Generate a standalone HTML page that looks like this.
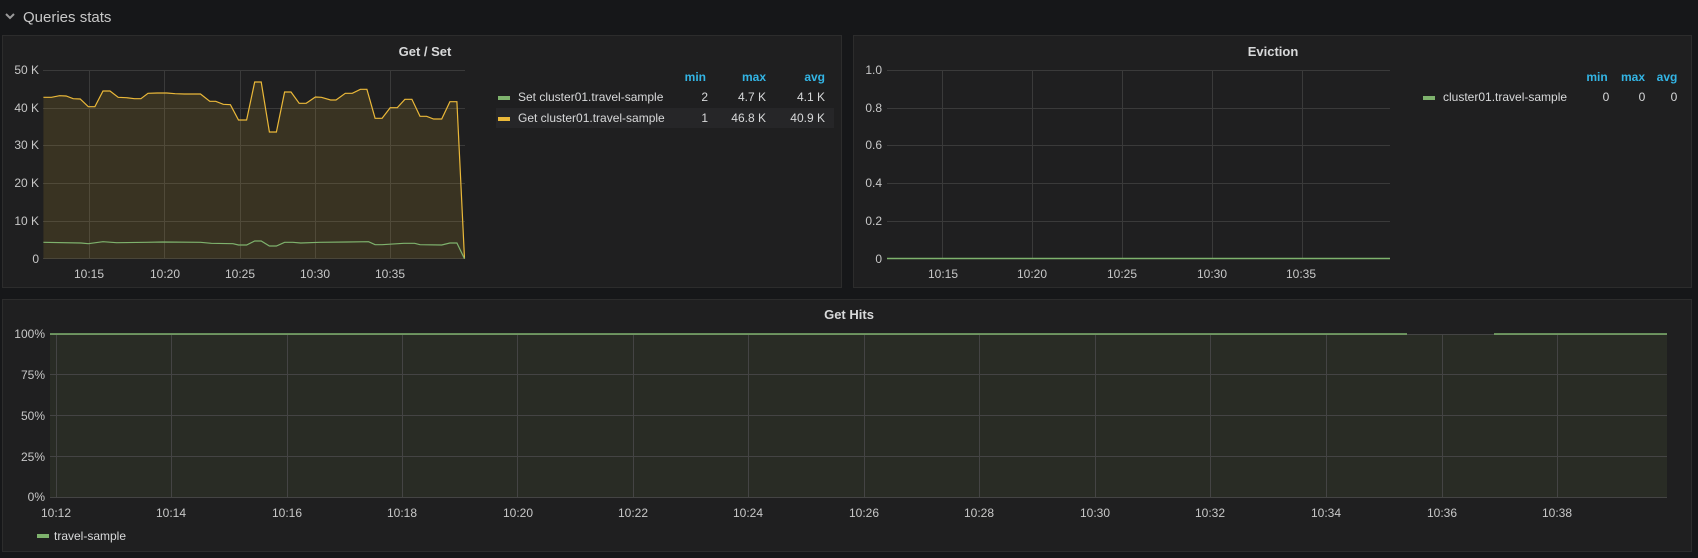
<!DOCTYPE html>
<html><head><meta charset="utf-8"><style>
html,body{margin:0;padding:0;background:#161719;width:1698px;height:558px;overflow:hidden}
svg{display:block}
text{font-family:"Liberation Sans",sans-serif;}
</style></head><body>
<svg width="1698" height="558" viewBox="0 0 1698 558" xmlns="http://www.w3.org/2000/svg">
<rect width="1698" height="558" fill="#161719"/>
<!-- header -->
<path d="M6 14 L10 18 L14 14" stroke="#9a9a9a" stroke-width="2" fill="none"/>
<text x="23" y="22" font-size="15" fill="#c8c8c8">Queries stats</text>

<!-- Panel 1 -->
<rect x="2.5" y="35.5" width="839" height="252" fill="#1f1f20" stroke="#2c2c2c"/>
<text x="425" y="56" font-size="13" font-weight="bold" fill="#d8d9da" text-anchor="middle">Get / Set</text>
<g stroke="#3a3a3a" stroke-width="1">
<line x1="43" x2="465" y1="70.5" y2="70.5"/><line x1="43" x2="465" y1="108.5" y2="108.5"/>
<line x1="43" x2="465" y1="145.5" y2="145.5"/><line x1="43" x2="465" y1="183.5" y2="183.5"/>
<line x1="43" x2="465" y1="221.5" y2="221.5"/><line x1="43" x2="465" y1="258.5" y2="258.5"/>
<line x1="89.5" x2="89.5" y1="70" y2="259"/><line x1="164.5" x2="164.5" y1="70" y2="259"/>
<line x1="240.5" x2="240.5" y1="70" y2="259"/><line x1="315.5" x2="315.5" y1="70" y2="259"/>
<line x1="390.5" x2="390.5" y1="70" y2="259"/>
</g>
<g font-size="12" fill="#c8c8c8" text-anchor="end">
<text x="39" y="74">50 K</text><text x="39" y="112">40 K</text><text x="39" y="149">30 K</text>
<text x="39" y="187">20 K</text><text x="39" y="225">10 K</text><text x="39" y="263">0</text>
</g>
<g font-size="12" fill="#c8c8c8" text-anchor="middle">
<text x="89" y="278">10:15</text><text x="165" y="278">10:20</text><text x="240" y="278">10:25</text>
<text x="315" y="278">10:30</text><text x="390" y="278">10:35</text>
</g>
<polygon fill="rgba(234,184,57,0.13)" points="43.4,258.7 43.4,97.3 51.5,97.3 59.6,95.7 66.1,96 73.2,98.7 80.2,99 88.3,106.7 94.9,106.7 103,91 110,91 118.2,97.3 126.3,97.7 134.4,98.7 140.9,98.7 148,93.3 157.2,93 166.9,93 175.1,93.7 184.3,94 192.4,94 200.5,94 209.8,101.3 215.7,101.3 223.3,104.3 230.4,104.7 238.5,120 246.6,120 254.7,82 261.2,82 269.4,132 276.4,132 284.6,92 291,92 299.2,103.3 306.2,103.3 315.4,97 321.4,97.3 330.6,100 336,100 345.3,93.3 352.3,93.3 360.4,89.3 366.9,89.3 375.1,118.3 382.1,118.3 390.2,107.7 397.3,107.7 404.9,99.3 411.9,99.3 420,116.3 426.6,116.3 433.6,119 441.7,119 449.9,101.7 456.9,101.7 464.5,258.7"/>
<polyline fill="none" stroke="#eab839" stroke-width="1.2" points="43.4,97.3 51.5,97.3 59.6,95.7 66.1,96 73.2,98.7 80.2,99 88.3,106.7 94.9,106.7 103,91 110,91 118.2,97.3 126.3,97.7 134.4,98.7 140.9,98.7 148,93.3 157.2,93 166.9,93 175.1,93.7 184.3,94 192.4,94 200.5,94 209.8,101.3 215.7,101.3 223.3,104.3 230.4,104.7 238.5,120 246.6,120 254.7,82 261.2,82 269.4,132 276.4,132 284.6,92 291,92 299.2,103.3 306.2,103.3 315.4,97 321.4,97.3 330.6,100 336,100 345.3,93.3 352.3,93.3 360.4,89.3 366.9,89.3 375.1,118.3 382.1,118.3 390.2,107.7 397.3,107.7 404.9,99.3 411.9,99.3 420,116.3 426.6,116.3 433.6,119 441.7,119 449.9,101.7 456.9,101.7 464.5,258.7"/>
<polyline fill="none" stroke="#7eb26d" stroke-width="1.2" points="43.4,242.3 81,243 88.3,243.7 103,241.7 116.5,242.7 146,242.3 162.6,242 200.5,242.3 211.4,243.3 233,243.7 238.5,245 246.6,245 254.7,241 261.2,241 269.4,246 276.4,246 284.6,242.3 292.7,242.3 300.8,243 319.8,242.3 346.9,242 368.6,241.7 375.1,244.7 382.1,244.7 403.8,243.3 414.6,243.3 420,244.7 441.7,245 449.9,243 456.9,243 464.5,258.7"/>
<!-- legend 1 -->
<g font-size="12" font-weight="bold" fill="#33b5e5" text-anchor="end">
<text x="706" y="81">min</text><text x="766" y="81">max</text><text x="825" y="81">avg</text>
</g>
<rect x="496" y="108" width="338" height="20" fill="#262628"/>
<rect x="498" y="96" width="12" height="4" fill="#7eb26d"/>
<rect x="498" y="117" width="12" height="4" fill="#eab839"/>
<g font-size="12" fill="#d8d9da">
<text x="518" y="101">Set cluster01.travel-sample</text>
<text x="518" y="122">Get cluster01.travel-sample</text>
</g>
<g font-size="12" fill="#d8d9da" text-anchor="end">
<text x="708" y="101">2</text><text x="766" y="101">4.7 K</text><text x="825" y="101">4.1 K</text>
<text x="708" y="122">1</text><text x="766" y="122">46.8 K</text><text x="825" y="122">40.9 K</text>
</g>

<!-- Panel 2 -->
<rect x="853.5" y="35.5" width="838" height="252" fill="#1f1f20" stroke="#2c2c2c"/>
<text x="1273" y="56" font-size="13" font-weight="bold" fill="#d8d9da" text-anchor="middle">Eviction</text>
<g stroke="#3a3a3a" stroke-width="1">
<line x1="887" x2="1390" y1="70.5" y2="70.5"/><line x1="887" x2="1390" y1="108.5" y2="108.5"/>
<line x1="887" x2="1390" y1="145.5" y2="145.5"/><line x1="887" x2="1390" y1="183.5" y2="183.5"/>
<line x1="887" x2="1390" y1="221.5" y2="221.5"/>
<line x1="942.5" x2="942.5" y1="70" y2="259"/><line x1="1032.5" x2="1032.5" y1="70" y2="259"/>
<line x1="1122.5" x2="1122.5" y1="70" y2="259"/><line x1="1212.5" x2="1212.5" y1="70" y2="259"/>
<line x1="1302.5" x2="1302.5" y1="70" y2="259"/>
</g>
<line x1="887" x2="1390" y1="258.5" y2="258.5" stroke="#7eb26d" stroke-width="1.5"/>
<g font-size="12" fill="#c8c8c8" text-anchor="end">
<text x="882" y="74">1.0</text><text x="882" y="112">0.8</text><text x="882" y="149">0.6</text>
<text x="882" y="187">0.4</text><text x="882" y="225">0.2</text><text x="882" y="263">0</text>
</g>
<g font-size="12" fill="#c8c8c8" text-anchor="middle">
<text x="943" y="278">10:15</text><text x="1032" y="278">10:20</text><text x="1122" y="278">10:25</text>
<text x="1212" y="278">10:30</text><text x="1301" y="278">10:35</text>
</g>
<g font-size="12" font-weight="bold" fill="#33b5e5" text-anchor="middle">
<text x="1597" y="81">min</text><text x="1633" y="81">max</text><text x="1667" y="81">avg</text>
</g>
<rect x="1423" y="96" width="12" height="4" fill="#7eb26d"/>
<text x="1443" y="101" font-size="12" fill="#d8d9da">cluster01.travel-sample</text>
<g font-size="12" fill="#d8d9da" text-anchor="middle">
<text x="1606" y="101">0</text><text x="1642" y="101">0</text><text x="1674" y="101">0</text>
</g>

<!-- Panel 3 -->
<rect x="2.5" y="299.5" width="1689" height="252" fill="#1f1f20" stroke="#2c2c2c"/>
<text x="849" y="319" font-size="13" font-weight="bold" fill="#d8d9da" text-anchor="middle">Get Hits</text>
<rect x="50" y="334" width="1617" height="163" fill="#292c25"/>
<g stroke="#444" stroke-width="1">
<line x1="50" x2="1667" y1="374.5" y2="374.5"/><line x1="50" x2="1667" y1="415.5" y2="415.5"/>
<line x1="50" x2="1667" y1="456.5" y2="456.5"/><line x1="50" x2="1667" y1="497.5" y2="497.5"/>
<line x1="50" x2="1667" y1="334.5" y2="334.5"/>
<line x1="56.5" x2="56.5" y1="334" y2="497"/><line x1="171.5" x2="171.5" y1="334" y2="497"/>
<line x1="287.5" x2="287.5" y1="334" y2="497"/><line x1="402.5" x2="402.5" y1="334" y2="497"/>
<line x1="517.5" x2="517.5" y1="334" y2="497"/><line x1="633.5" x2="633.5" y1="334" y2="497"/>
<line x1="748.5" x2="748.5" y1="334" y2="497"/><line x1="864.5" x2="864.5" y1="334" y2="497"/>
<line x1="979.5" x2="979.5" y1="334" y2="497"/><line x1="1095.5" x2="1095.5" y1="334" y2="497"/>
<line x1="1210.5" x2="1210.5" y1="334" y2="497"/><line x1="1326.5" x2="1326.5" y1="334" y2="497"/>
<line x1="1442.5" x2="1442.5" y1="334" y2="497"/><line x1="1557.5" x2="1557.5" y1="334" y2="497"/>
</g>
<line x1="50" x2="1407" y1="334" y2="334" stroke="#7eb26d" stroke-width="1.5"/>
<line x1="1494" x2="1667" y1="334" y2="334" stroke="#7eb26d" stroke-width="1.5"/>
<g font-size="12" fill="#c8c8c8" text-anchor="end">
<text x="45" y="338">100%</text><text x="45" y="379">75%</text><text x="45" y="420">50%</text>
<text x="45" y="461">25%</text><text x="45" y="501">0%</text>
</g>
<g font-size="12" fill="#c8c8c8" text-anchor="middle">
<text x="56" y="517">10:12</text><text x="171" y="517">10:14</text><text x="287" y="517">10:16</text>
<text x="402" y="517">10:18</text><text x="518" y="517">10:20</text><text x="633" y="517">10:22</text>
<text x="748" y="517">10:24</text><text x="864" y="517">10:26</text><text x="979" y="517">10:28</text>
<text x="1095" y="517">10:30</text><text x="1210" y="517">10:32</text><text x="1326" y="517">10:34</text>
<text x="1442" y="517">10:36</text><text x="1557" y="517">10:38</text>
</g>
<rect x="37" y="534" width="12" height="4" fill="#7eb26d"/>
<text x="54" y="540" font-size="12" fill="#d8d9da">travel-sample</text>
</svg>
</body></html>
